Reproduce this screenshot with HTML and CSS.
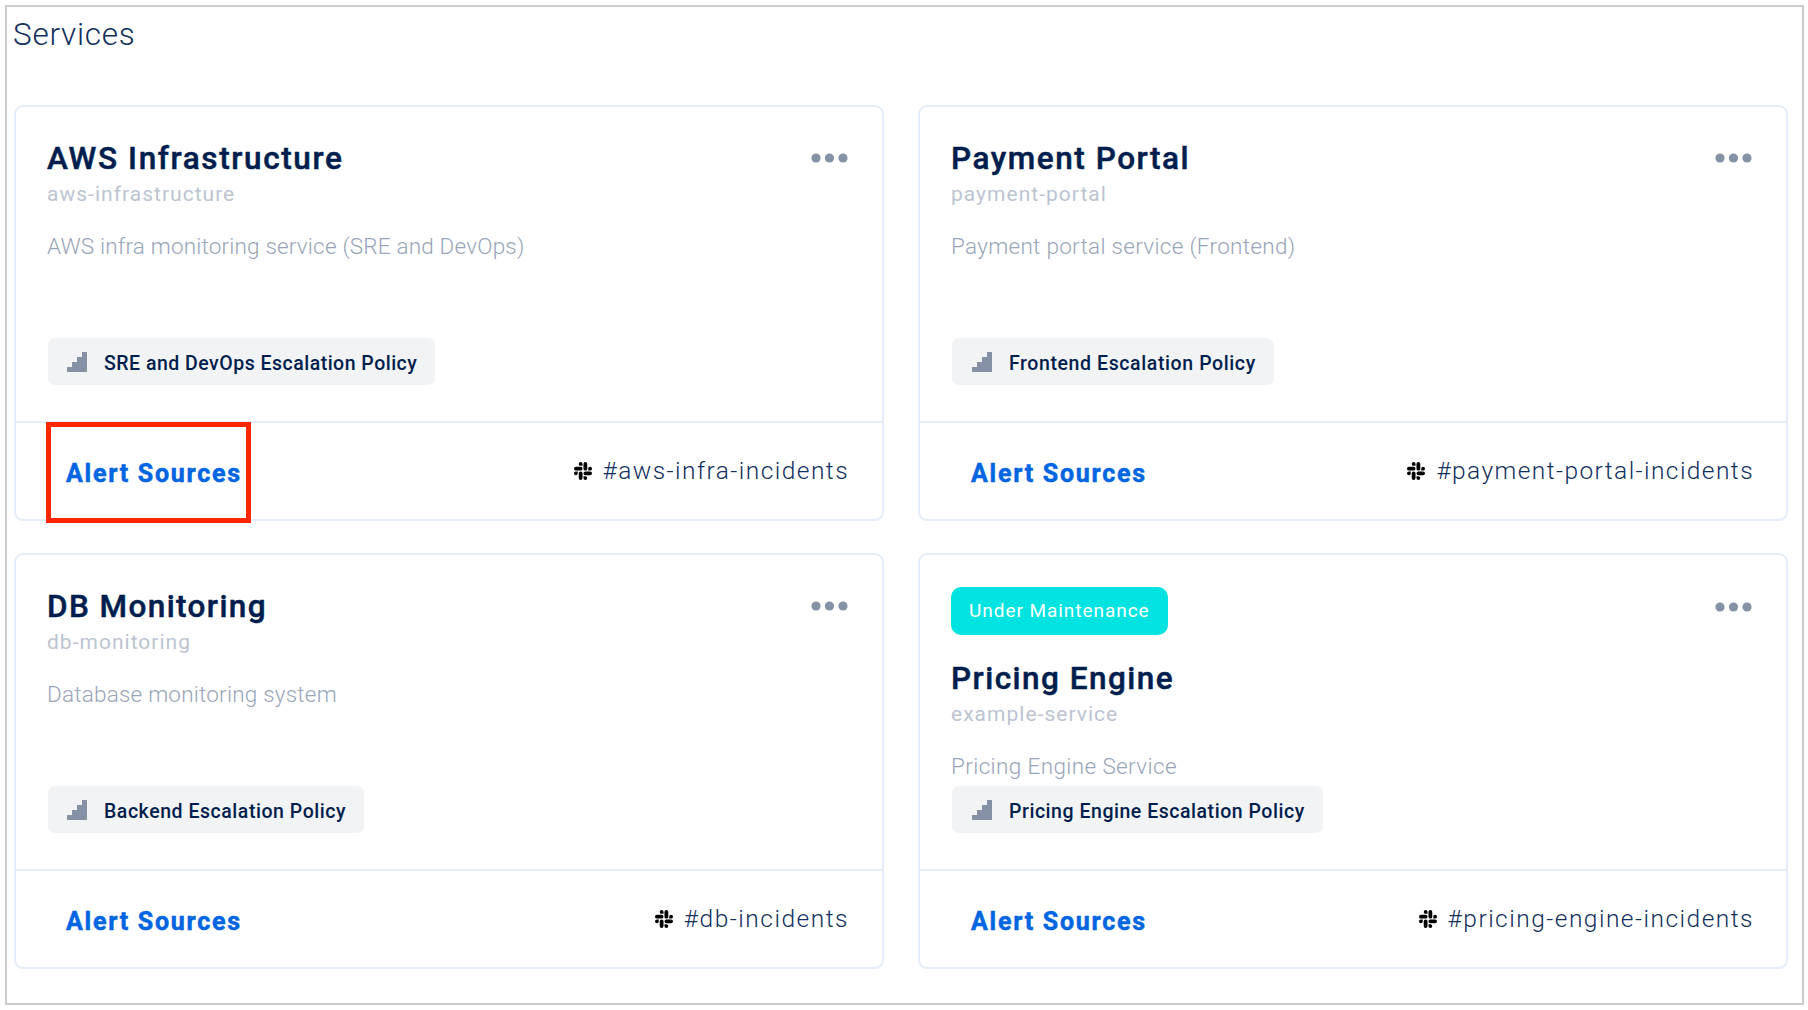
FILE: index.html
```
<!DOCTYPE html>
<html lang="en">
<head>
<meta charset="utf-8">
<title>Services</title>
<link rel="stylesheet" href="styles.css">
</head>
<body>
<svg class="sprite" aria-hidden="true">
  <symbol id="stairs" viewBox="0 0 20 20"><path d="M0 20V15H5V10H10V5H15V0H20V20Z"/></symbol>
  <symbol id="dots" viewBox="0 0 38 10"><circle cx="5" cy="5" r="4.6"/><circle cx="18.5" cy="5" r="4.6"/><circle cx="32" cy="5" r="4.6"/></symbol>
  <symbol id="slack" viewBox="0 0 24 24"><path d="M5.042 15.165a2.528 2.528 0 0 1-2.52 2.523A2.528 2.528 0 0 1 0 15.165a2.527 2.527 0 0 1 2.522-2.52h2.52v2.52zM6.313 15.165a2.527 2.527 0 0 1 2.521-2.52 2.527 2.527 0 0 1 2.521 2.52v6.313A2.528 2.528 0 0 1 8.834 24a2.528 2.528 0 0 1-2.521-2.522v-6.313zM8.834 5.042a2.528 2.528 0 0 1-2.521-2.52A2.528 2.528 0 0 1 8.834 0a2.528 2.528 0 0 1 2.521 2.522v2.52H8.834zM8.834 6.313a2.528 2.528 0 0 1 2.521 2.521 2.528 2.528 0 0 1-2.521 2.521H2.522A2.528 2.528 0 0 1 0 8.834a2.528 2.528 0 0 1 2.522-2.521h6.312zM18.956 8.834a2.528 2.528 0 0 1 2.522-2.521A2.528 2.528 0 0 1 24 8.834a2.528 2.528 0 0 1-2.522 2.521h-2.522V8.834zM17.688 8.834a2.528 2.528 0 0 1-2.523 2.521 2.527 2.527 0 0 1-2.52-2.521V2.522A2.527 2.527 0 0 1 15.165 0a2.528 2.528 0 0 1 2.523 2.522v6.312zM15.165 18.956a2.528 2.528 0 0 1 2.523 2.522A2.528 2.528 0 0 1 15.165 24a2.527 2.527 0 0 1-2.52-2.522v-2.522h2.52zM15.165 17.688a2.527 2.527 0 0 1-2.52-2.523 2.526 2.526 0 0 1 2.52-2.52h6.313A2.527 2.527 0 0 1 24 15.165a2.528 2.528 0 0 1-2.522 2.523h-6.313z"/></symbol>
</svg>
<main class="frame">
  <h1 class="page-title">Services</h1>
  <div class="grid">
    <article class="card card-aws">
      <div class="body">
        <div class="head"><h2 class="name">AWS Infrastructure</h2><svg class="dots"><use href="#dots"/></svg></div>
        <p class="slug">aws-infrastructure</p>
        <p class="desc">AWS infra monitoring service (SRE and DevOps)</p>
        <div class="policy"><svg class="stairs"><use href="#stairs"/></svg><span>SRE and DevOps Escalation Policy</span></div>
      </div>
      <div class="foot"><a class="alerts">Alert Sources</a><div class="channel"><svg class="slack"><use href="#slack"/></svg><span>#aws-infra-incidents</span></div><div class="highlight"></div></div>
    </article>
    <article class="card card-payment">
      <div class="body">
        <div class="head"><h2 class="name">Payment Portal</h2><svg class="dots"><use href="#dots"/></svg></div>
        <p class="slug">payment-portal</p>
        <p class="desc">Payment portal service (Frontend)</p>
        <div class="policy"><svg class="stairs"><use href="#stairs"/></svg><span>Frontend Escalation Policy</span></div>
      </div>
      <div class="foot"><a class="alerts">Alert Sources</a><div class="channel"><svg class="slack"><use href="#slack"/></svg><span>#payment-portal-incidents</span></div></div>
    </article>
    <article class="card card-db">
      <div class="body">
        <div class="head"><h2 class="name">DB Monitoring</h2><svg class="dots"><use href="#dots"/></svg></div>
        <p class="slug">db-monitoring</p>
        <p class="desc">Database monitoring system</p>
        <div class="policy"><svg class="stairs"><use href="#stairs"/></svg><span>Backend Escalation Policy</span></div>
      </div>
      <div class="foot"><a class="alerts">Alert Sources</a><div class="channel"><svg class="slack"><use href="#slack"/></svg><span>#db-incidents</span></div></div>
    </article>
    <article class="card card-pricing">
      <div class="body">
        <div class="head status"><div class="badge">Under Maintenance</div><svg class="dots"><use href="#dots"/></svg></div>
        <h2 class="name">Pricing Engine</h2>
        <p class="slug">example-service</p>
        <p class="desc">Pricing Engine Service</p>
        <div class="policy"><svg class="stairs"><use href="#stairs"/></svg><span>Pricing Engine Escalation Policy</span></div>
      </div>
      <div class="foot"><a class="alerts">Alert Sources</a><div class="channel"><svg class="slack"><use href="#slack"/></svg><span>#pricing-engine-incidents</span></div></div>
    </article>
  </div>
</main>
</body>
</html>
```
FILE: styles.css
```
* { box-sizing: border-box; }
body { margin: 0; background: #fff; font-family: Roboto, "Open Sans", sans-serif; color: #001e4d; }
h1, h2, p { margin: 0; }
.sprite { display: none; }
.frame { margin: 5px 4px 4px 5px; height: 1000px; width: 1799px; border: 2px solid #ccc; padding: 0 0 0 7px; }
.page-title { height: 98px; padding-top: 9px; font-size: 31.5px; line-height: 38px; font-weight: 300; letter-spacing: .75px; color: #12305d; margin-left: -1px; }
.grid { display: grid; grid-template-columns: 870px 870px; grid-auto-rows: 416px; column-gap: 34px; row-gap: 32px; }
.card { display: flex; flex-direction: column; border: 2px solid #e5edf8; border-radius: 9px; }

/* Tracking per card */
.card-aws { --name: 1.62px; --desc: .19px; --policy: .49px; --channel: 1.45px; }
.card-payment { --name: 1.55px; --desc: .3px; --policy: .6px; --channel: 1.42px; }
.card-db { --name: 1.4px; --desc: .22px; --policy: .54px; --channel: 1.5px; }
.card-pricing { --name: 1.47px; --desc: .38px; --policy: .53px; --channel: 1.48px; }

.body { height: 314px; flex: none; display: flex; flex-direction: column; align-items: flex-start; padding: 32px 31px 36px; }
.head { width: 100%; display: flex; justify-content: space-between; align-items: center; }
.status { align-items: flex-start; margin-bottom: 24px; }
.status .dots { margin-top: 15px; }
.name { font-size: 31.5px; line-height: 38px; font-weight: 500; padding-top: 1px; letter-spacing: var(--name); -webkit-text-stroke: .5px currentColor; }
.dots { width: 38px; height: 10px; fill: #8592a6; margin: 0 2px 1px 0; }
.slug { font-size: 21px; line-height: 26px; margin-top: 3px; letter-spacing: 1.02px; color: #bcc4d1; }
.desc { font-size: 22.5px; line-height: 28px; font-weight: 300; margin-top: 25px; letter-spacing: var(--desc); color: #99a5b8; }
.policy { margin: auto 0 0 1px; height: 47px; display: flex; align-items: center; border-radius: 7px; background: #f2f3f5; padding: 0 18px 0 19px; gap: 17px; font-size: 19.5px; font-weight: 500; letter-spacing: var(--policy); }
.policy span { padding-top: 3px; }
.card-payment .policy, .card-pricing .policy { padding-left: 20px; }
.stairs { width: 20px; height: 20px; fill: #8592a6; margin-top: 1px; }
.foot { position: relative; flex: 1; border-top: 2px solid #e5edf8; display: flex; align-items: center; justify-content: space-between; padding: 0 33px 0 50px; }
.card-payment .foot, .card-pricing .foot { padding: 0 32px 0 51px; }
.alerts { padding-top: 4px; font-size: 25px; font-weight: 700; letter-spacing: 1.75px; color: #0065e0; -webkit-text-stroke: .5px currentColor; }
.channel { display: flex; align-items: center; gap: 11px; font-size: 24.5px; font-weight: 300; letter-spacing: var(--channel); color: #12305d; }
.channel span { padding-bottom: 1px; }
.slack { width: 18px; height: 18px; fill: #000; }
.highlight { position: absolute; left: 29.5px; top: -1px; width: 205px; height: 101px; border: 5px solid #ff2600; }
.badge { height: 48px; border-radius: 10px; background: #00e3e0; color: #fff; padding: 0 18px 1px 18px; display: flex; align-items: center; font-size: 19px; letter-spacing: .95px; }
```
